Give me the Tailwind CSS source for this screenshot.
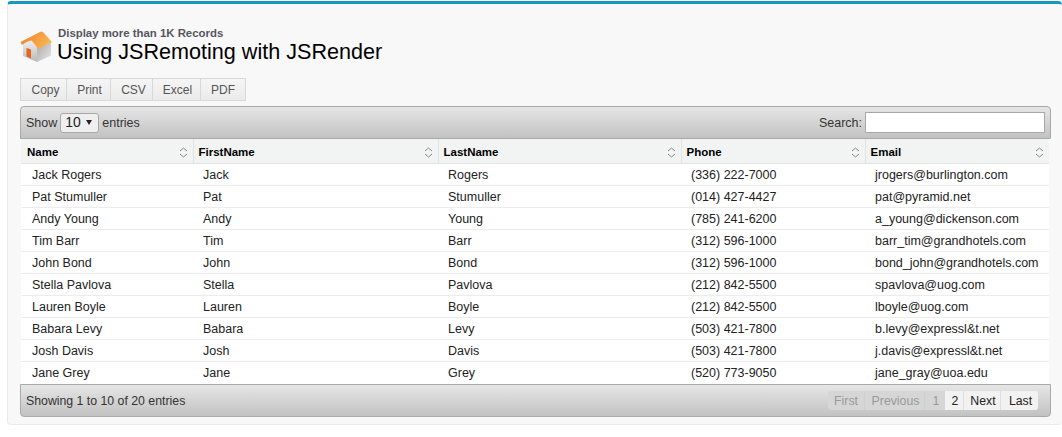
<!DOCTYPE html>
<html lang="en">
<head>
  <meta charset="UTF-8">
  <title>Using JSRemoting with JSRender</title>
  <script src="https://cdn.jsdelivr.net/npm/@tailwindcss/browser@4"></script>
</head>
<body class="bg-white h-[437px] overflow-hidden font-['Liberation_Sans',Arial,sans-serif] text-[#222]">
  <div class="ml-[7px] mt-[1px] h-[424px] bg-[#f8f8f8] border-t-[3px] border-t-[#1797c0] border-b border-b-[#eaeaea] border-l border-l-[#eaeaea] rounded-[4px] pl-[12px] pr-[11px]">
    <!-- page header -->
    <div class="flex items-start h-[74px] pt-[23px]">
      <svg class="w-[33px] h-[32px] mt-[4px] shrink-0" viewBox="0 0 33 32">
        <defs>
          <linearGradient id="roof" x1="0" y1="0" x2="1" y2="0.4"><stop offset="0" stop-color="#ee7f26"/><stop offset="1" stop-color="#f9b455"/></linearGradient>
          <linearGradient id="wall" x1="0" y1="0" x2="0" y2="1"><stop offset="0" stop-color="#f4f4f4"/><stop offset="1" stop-color="#b9b9b9"/></linearGradient>
          <linearGradient id="side" x1="0" y1="0" x2="1" y2="1"><stop offset="0" stop-color="#a8a8a8"/><stop offset="1" stop-color="#e6e6e6"/></linearGradient>
        </defs>
        <path d="M3 12 L12 7 L17 15 L17 31 L3 25 Z" fill="url(#wall)"/>
        <path d="M17 15 L31 10 L31 24.5 L17 31 Z" fill="url(#side)"/>
        <path d="M6.5 17 L11 18.5 L11 27.5 L6.5 25.5 Z" fill="#e8631b"/>
        <path d="M0.5 11 L20 1 Q22 0 23.5 1.5 L32 11 L18 18 Q15 13 11.5 9.5 Q7 10 2 14 Z" fill="url(#roof)"/>
      </svg>
      <div class="ml-[5px]">
        <div class="text-[11.4px] leading-[12px] font-bold text-[#56565f]">Display more than 1K Records</div>
        <h1 class="-ml-[1px] text-[21.6px] leading-[25px] text-black">Using JSRemoting with JSRender</h1>
      </div>
    </div>

    <!-- export buttons -->
    <div class="flex h-[23px] w-[226px] border border-[#d8d8d8] bg-gradient-to-b from-[#f5f5f5] to-[#ebebeb] text-[12px] text-[#555]">
      <div class="w-[46px] pl-[4px] flex items-center justify-center border-r border-[#d8d8d8]">Copy</div>
      <div class="w-[44px] pl-[2px] flex items-center justify-center border-r border-[#d8d8d8]">Print</div>
      <div class="w-[42px] pl-[4px] flex items-center justify-center border-r border-[#d8d8d8]">CSV</div>
      <div class="w-[48px] pl-[2px] flex items-center justify-center border-r border-[#d8d8d8]">Excel</div>
      <div class="flex-1 flex items-center justify-center">PDF</div>
    </div>

    <!-- table wrapper -->
    <div class="mt-[5px] text-[12.5px]">
      <div class="h-[33px] flex items-center justify-between px-[5px] rounded-t-[4px] border border-[#a9a9a9] bg-gradient-to-b from-[#e6e6e6] to-[#c2c2c2] text-[#333]">
        <div class="flex items-center">
          <span class="pt-[1px]">Show</span>
          <div class="ml-[3px] mr-[3px] w-[39px] h-[20px] flex items-center justify-between pl-[4px] pr-[6px] rounded-[3px] border border-[#a8a8a8] bg-[#efefef] text-[14px] text-[#222]">
            <span>10</span>
            <svg class="w-[6px] h-[5px]" viewBox="0 0 6 5"><path d="M0 0 H6 L3 5 Z" fill="#222"/></svg>
          </div>
          <span class="pt-[1px]">entries</span>
        </div>
        <div class="flex items-center">
          <span class="pt-[1px]">Search:</span>
          <div class="ml-[3px] w-[180px] h-[21px] bg-white border border-[#a8a8a8]"></div>
        </div>
      </div>

      <table class="w-[1028px] ml-[1px] table-fixed border-collapse bg-white text-[#222]">
        <thead>
          <tr class="h-[24px] bg-[#f2f3f3] text-black text-[11.5px] leading-[14px] font-bold text-left border-b border-[#e3e3e3]">
            <th class="w-[172px] pl-[6px] pt-[3px] border-r border-[#e3e3e3]"><div class="flex items-center justify-between pr-[5px]">Name<svg class="w-[9px] h-[11px]" viewBox="0 0 9 11"><path d="M1 4 L4.5 1 L8 4 M1 7 L4.5 10 L8 7" fill="none" stroke="#888"/></svg></div></th>
            <th class="w-[245px] pl-[5px] pt-[3px] border-r border-[#e3e3e3]"><div class="flex items-center justify-between pr-[5px]">FirstName<svg class="w-[9px] h-[11px]" viewBox="0 0 9 11"><path d="M1 4 L4.5 1 L8 4 M1 7 L4.5 10 L8 7" fill="none" stroke="#888"/></svg></div></th>
            <th class="w-[243px] pl-[5px] pt-[3px] border-r border-[#e3e3e3]"><div class="flex items-center justify-between pr-[5px]">LastName<svg class="w-[9px] h-[11px]" viewBox="0 0 9 11"><path d="M1 4 L4.5 1 L8 4 M1 7 L4.5 10 L8 7" fill="none" stroke="#888"/></svg></div></th>
            <th class="w-[184px] pl-[5px] pt-[3px] border-r border-[#e3e3e3]"><div class="flex items-center justify-between pr-[5px]">Phone<svg class="w-[9px] h-[11px]" viewBox="0 0 9 11"><path d="M1 4 L4.5 1 L8 4 M1 7 L4.5 10 L8 7" fill="none" stroke="#888"/></svg></div></th>
            <th class="pl-[5px] pt-[3px]"><div class="flex items-center justify-between pr-[5px]">Email<svg class="w-[9px] h-[11px]" viewBox="0 0 9 11"><path d="M1 4 L4.5 1 L8 4 M1 7 L4.5 10 L8 7" fill="none" stroke="#888"/></svg></div></th>
          </tr>
        </thead>
        <tbody class="leading-[14px] [&_td]:pl-[10px] [&_td]:pt-[1px] [&_td:first-child]:pl-[11px]">
          <tr class="h-[22px] border-b border-[#ececec]"><td>Jack Rogers</td><td>Jack</td><td>Rogers</td><td>(336) 222-7000</td><td>jrogers@burlington.com</td></tr>
          <tr class="h-[22px] border-b border-[#ececec]"><td>Pat Stumuller</td><td>Pat</td><td>Stumuller</td><td>(014) 427-4427</td><td>pat@pyramid.net</td></tr>
          <tr class="h-[22px] border-b border-[#ececec]"><td>Andy Young</td><td>Andy</td><td>Young</td><td>(785) 241-6200</td><td>a_young@dickenson.com</td></tr>
          <tr class="h-[22px] border-b border-[#ececec]"><td>Tim Barr</td><td>Tim</td><td>Barr</td><td>(312) 596-1000</td><td>barr_tim@grandhotels.com</td></tr>
          <tr class="h-[22px] border-b border-[#ececec]"><td>John Bond</td><td>John</td><td>Bond</td><td>(312) 596-1000</td><td>bond_john@grandhotels.com</td></tr>
          <tr class="h-[22px] border-b border-[#ececec]"><td>Stella Pavlova</td><td>Stella</td><td>Pavlova</td><td>(212) 842-5500</td><td>spavlova@uog.com</td></tr>
          <tr class="h-[22px] border-b border-[#ececec]"><td>Lauren Boyle</td><td>Lauren</td><td>Boyle</td><td>(212) 842-5500</td><td>lboyle@uog.com</td></tr>
          <tr class="h-[22px] border-b border-[#ececec]"><td>Babara Levy</td><td>Babara</td><td>Levy</td><td>(503) 421-7800</td><td>b.levy@expressl&amp;t.net</td></tr>
          <tr class="h-[22px] border-b border-[#ececec]"><td>Josh Davis</td><td>Josh</td><td>Davis</td><td>(503) 421-7800</td><td>j.davis@expressl&amp;t.net</td></tr>
          <tr class="h-[23px]"><td>Jane Grey</td><td>Jane</td><td>Grey</td><td>(520) 773-9050</td><td>jane_gray@uoa.edu</td></tr>
        </tbody>
      </table>

      <div class="h-[33px] flex items-center justify-between pl-[5px] pr-[12px] rounded-b-[4px] border border-[#a9a9a9] bg-gradient-to-b from-[#e6e6e6] to-[#c2c2c2] text-[#333] text-[12.3px]">
        <span class="pt-[1px]">Showing 1 to 10 of 20 entries</span>
        <div class="flex h-[19px] items-center rounded-[3px] overflow-hidden">
          <span class="w-[37px] h-full pt-[1px] flex items-center justify-center bg-[#d6d6d6] text-[#999] border-r border-[#cfcfcf]">First</span>
          <span class="w-[60px] h-full pt-[1px] pl-[2px] flex items-center justify-center bg-[#d6d6d6] text-[#999] border-r border-[#cfcfcf]">Previous</span>
          <span class="w-[20px] h-full pt-[1px] pl-[2px] flex items-center justify-center bg-[#d6d6d6] text-[#999]">1</span>
          <span class="w-[19px] h-full pt-[1px] pl-[2px] flex items-center justify-center bg-[#f2f2f2] text-[#222] border-r border-[#ddd]">2</span>
          <span class="w-[37px] h-full pt-[1px] pl-[2px] flex items-center justify-center bg-[#f2f2f2] text-[#222] border-r border-[#ddd]">Next</span>
          <span class="w-[37px] h-full pt-[1px] pl-[2px] flex items-center justify-center bg-[#f2f2f2] text-[#222]">Last</span>
        </div>
      </div>
    </div>
  </div>
</body>
</html>
